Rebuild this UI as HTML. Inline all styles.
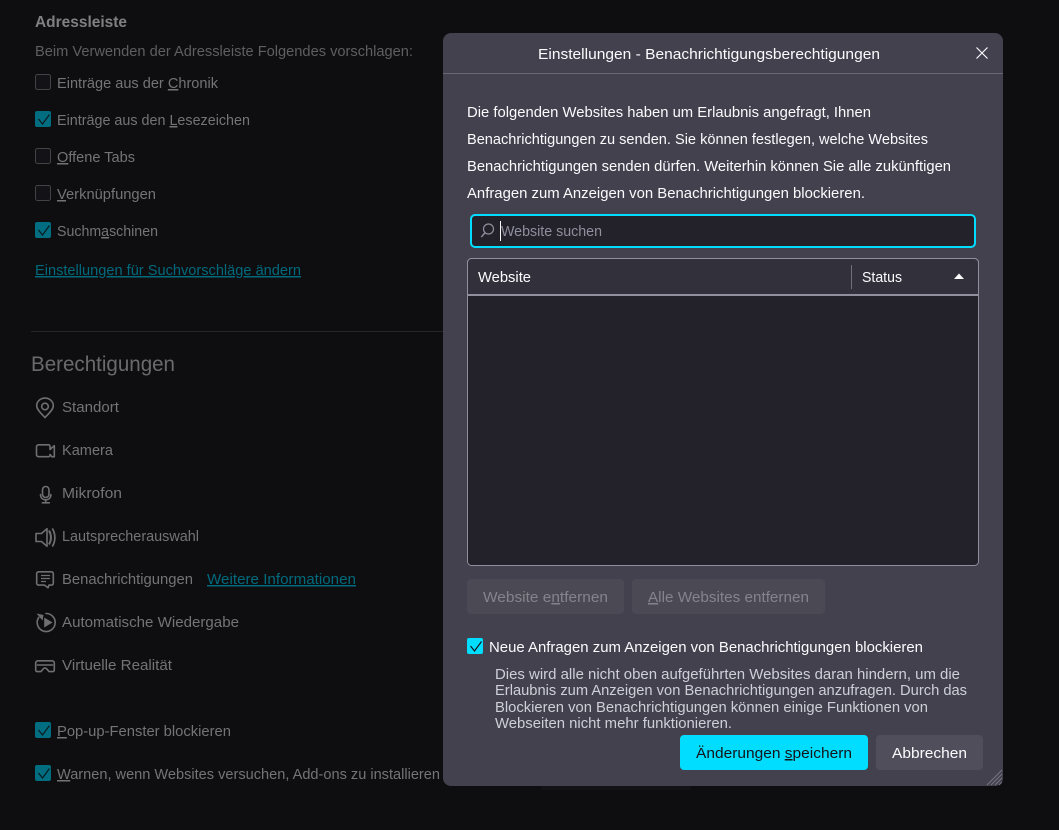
<!DOCTYPE html>
<html lang="de">
<head>
<meta charset="utf-8">
<title>Einstellungen</title>
<style>
html,body{margin:0;padding:0;background:#0e0e11;width:1059px;height:830px;overflow:hidden}
svg{display:block;position:absolute;left:0;top:0}
text{font-family:"Liberation Sans",sans-serif;font-size:15px;white-space:pre}
.d{fill:#747478}
.l{fill:#006a7c}
.w{fill:#fbfbfe}
.i{fill:none;stroke:#6f6f73;stroke-width:1.6;stroke-linejoin:round;stroke-linecap:round}
.f{fill:#6f6f73}
.u{text-decoration:underline}
</style>
</head>
<body>
<svg width="1059" height="830" viewBox="0 0 1059 830" xmlns="http://www.w3.org/2000/svg">
<rect width="1059" height="830" fill="#0e0e11"/>

<!-- Background page -->
<text x="35" y="27" class="d" style="font-weight:bold;font-size:16px;fill:#808084" textLength="92" lengthAdjust="spacingAndGlyphs">Adressleiste</text>
<text x="35" y="56" class="d" style="fill:#5f5f63" textLength="378" lengthAdjust="spacingAndGlyphs">Beim Verwenden der Adressleiste Folgendes vorschlagen:</text>

<rect x="35.5" y="74.500" width="15" height="15" rx="2" fill="#131317" stroke="#434347"/>
<text x="57" y="88" class="d" textLength="161" lengthAdjust="spacingAndGlyphs">Einträge aus der <tspan class="u">C</tspan>hronik</text>

<rect x="35" y="111" width="16" height="16" rx="2" fill="#006d80"/>
<path d="M38.500 119l4 5 7-9.500" fill="none" stroke="#0c1a20" stroke-width="1.200"/>
<text x="57" y="125" class="d" textLength="193" lengthAdjust="spacingAndGlyphs">Einträge aus den <tspan class="u">L</tspan>esezeichen</text>

<rect x="35.5" y="148.500" width="15" height="15" rx="2" fill="#131317" stroke="#434347"/>
<text x="57" y="162" class="d" textLength="78" lengthAdjust="spacingAndGlyphs"><tspan class="u">O</tspan>ffene Tabs</text>

<rect x="35.5" y="185.500" width="15" height="15" rx="2" fill="#131317" stroke="#434347"/>
<text x="57" y="199" class="d" textLength="99" lengthAdjust="spacingAndGlyphs"><tspan class="u">V</tspan>erknüpfungen</text>

<rect x="35" y="222" width="16" height="16" rx="2" fill="#006d80"/>
<path d="M38.500 230l4 5 7-9.500" fill="none" stroke="#0c1a20" stroke-width="1.200"/>
<text x="57" y="236" class="d" textLength="101" lengthAdjust="spacingAndGlyphs">Suchm<tspan class="u">a</tspan>schinen</text>

<text x="35" y="275" class="l u" textLength="266" lengthAdjust="spacingAndGlyphs">Einstellungen für Suchvorschläge ändern</text>

<rect x="31" y="331" width="412" height="1" fill="#26262a"/>
<text x="31" y="371" class="d" style="font-size:21px;fill:#6a6a6e" textLength="144" lengthAdjust="spacingAndGlyphs">Berechtigungen</text>

<!-- Standort -->
<path class="i" d="M45 417.600c-2.500-3-8.300-7.500-8.300-12a8.300 7.500 0 0 1 16.600 0c0 4.500-5.800 9-8.300 12z"/>
<circle class="i" cx="45" cy="406.500" r="3.300"/>
<text x="62" y="412" class="d" textLength="57" lengthAdjust="spacingAndGlyphs">Standort</text>

<!-- Kamera -->
<path class="i" d="M38.500 444.800h10a1.500 1.500 0 0 1 1.500 1.500v3.200l4.300-3.800v11l-2.300 .1-2-2.300v.7a1.500 1.500 0 0 1-1.500 1.500h-10a2 2 0 0 1-2-2v-7.900a2 2 0 0 1 2-2z"/>
<text x="62" y="455" class="d" textLength="51" lengthAdjust="spacingAndGlyphs">Kamera</text>

<!-- Mikrofon -->
<rect class="i" x="42.500" y="486.500" width="6.500" height="11" rx="3.250"/>
<path class="i" d="M40.500 494.500c0 3.500 2.200 5.300 5.200 5.300s5.200-1.800 5.200-5.300M45.700 500v2.500M42.300 502.800h7"/>
<text x="62" y="498" class="d" textLength="60" lengthAdjust="spacingAndGlyphs">Mikrofon</text>

<!-- Lautsprecher -->
<path class="i" d="M36 533.500h5.500l5.500-4.800v17.600l-5.500-4.800H36z"/>
<path d="M49 530.500c2.500 4.500 2.500 9.500 0 14" fill="none" stroke="#6f6f73" stroke-width="2"/>
<path d="M52.300 528.500c3.400 5.500 3.400 12.500 0 18" fill="none" stroke="#6f6f73" stroke-width="1.700"/>
<text x="62" y="541" class="d" textLength="137" lengthAdjust="spacingAndGlyphs">Lautsprecherauswahl</text>

<!-- Benachrichtigungen -->
<path class="i" d="M38.500 571.800h13a1.800 1.800 0 0 1 1.800 1.800v9.700a1.800 1.800 0 0 1-1.800 1.800h-2.500l-1 2.700-3.500-2.700h-6a1.800 1.800 0 0 1-1.800-1.800v-9.700a1.800 1.800 0 0 1 1.800-1.800z"/>
<path d="M41 575.500h9M41 578.500h9M41 581.500h5" fill="none" stroke="#6f6f73" stroke-width="1.300"/>
<text x="62" y="584" class="d" textLength="131" lengthAdjust="spacingAndGlyphs">Benachrichtigungen</text>
<text x="207" y="584" class="l u" textLength="149" lengthAdjust="spacingAndGlyphs">Weitere Informationen</text>

<!-- Automatische Wiedergabe -->
<path class="i" d="M38.700 617.500a9 9 0 1 0 7.300-4"/>
<path d="M36.500 613.500l7 1.500-1 5.500z" class="f"/>
<path d="M44.200 617.500l8.300 5-8.300 5z" class="f"/>
<text x="62" y="627" class="d" textLength="177" lengthAdjust="spacingAndGlyphs">Automatische Wiedergabe</text>

<!-- VR -->
<path class="i" d="M38 660.800h14a2.300 2.300 0 0 1 2.300 2.300v7a1.500 1.500 0 0 1-1.500 1.500h-3.800l-2.200-2.700a2.300 2.300 0 0 0-3.600 0l-2.200 2.700h-3.800a1.500 1.500 0 0 1-1.500-1.500v-7a2.300 2.300 0 0 1 2.300-2.300z"/>
<path class="i" d="M37.500 665h15"/>
<text x="62" y="670" class="d" textLength="110" lengthAdjust="spacingAndGlyphs">Virtuelle Realität</text>

<rect x="35" y="722" width="16" height="16" rx="2" fill="#006d80"/>
<path d="M38.500 730l4 5 7-9.500" fill="none" stroke="#0c1a20" stroke-width="1.200"/>
<text x="57" y="736" class="d" textLength="174" lengthAdjust="spacingAndGlyphs"><tspan class="u">P</tspan>op-up-Fenster blockieren</text>

<rect x="35" y="765" width="16" height="16" rx="2" fill="#006d80"/>
<path d="M38.500 773l4 5 7-9.500" fill="none" stroke="#0c1a20" stroke-width="1.200"/>
<text x="57" y="779" class="d" textLength="383" lengthAdjust="spacingAndGlyphs"><tspan class="u">W</tspan>arnen, wenn Websites versuchen, Add-ons zu installieren</text>

<rect x="541" y="770" width="150" height="20" rx="3" fill="#131317"/>

<!-- Dialog -->
<rect x="443" y="33" width="560" height="753" rx="8" fill="#42414d"/>
<rect x="443" y="73" width="560" height="1" fill="#6a6973"/>
<text x="538" y="59" class="w" textLength="342" lengthAdjust="spacingAndGlyphs">Einstellungen - Benachrichtigungsberechtigungen</text>
<path d="M976.500 47.500l11 11M987.500 47.500l-11 11" fill="none" stroke="#fbfbfe" stroke-width="1.200"/>

<text x="467" y="117" class="w" textLength="404" lengthAdjust="spacingAndGlyphs">Die folgenden Websites haben um Erlaubnis angefragt, Ihnen</text>
<text x="467" y="144" class="w" textLength="461" lengthAdjust="spacingAndGlyphs">Benachrichtigungen zu senden. Sie können festlegen, welche Websites</text>
<text x="467" y="171" class="w" textLength="484" lengthAdjust="spacingAndGlyphs">Benachrichtigungen senden dürfen. Weiterhin können Sie alle zukünftigen</text>
<text x="467" y="198" class="w" textLength="398" lengthAdjust="spacingAndGlyphs">Anfragen zum Anzeigen von Benachrichtigungen blockieren.</text>

<!-- Search -->
<rect x="471" y="215" width="504" height="32" rx="4" fill="#23222b" stroke="#00ddff" stroke-width="2"/>
<circle cx="488.500" cy="229" r="5" fill="none" stroke="#8f8f9d" stroke-width="1.200"/>
<path d="M484.800 233l-3.500 4" fill="none" stroke="#8f8f9d" stroke-width="1.400"/>
<rect x="500" y="221" width="1" height="20" fill="#fbfbfe"/>
<text x="501" y="236" style="fill:#8f8f9d" textLength="101" lengthAdjust="spacingAndGlyphs">Website suchen</text>

<!-- Table -->
<rect x="467.500" y="258.500" width="511" height="307" rx="4" fill="#23222b" stroke="#8f8f9d"/>
<path d="M468 294v-31.500a4 4 0 0 1 4-4h502a4 4 0 0 1 4 4V294z" fill="#32313b"/>
<path d="M471.500 258.500h503a4 4 0 0 1 4 4V294M467.500 294V262.500a4 4 0 0 1 4-4" fill="none" stroke="#8f8f9d"/>
<rect x="468" y="294" width="510" height="2" fill="#8f8f9d"/>
<rect x="851" y="265" width="1" height="24" fill="#6f6f79"/>
<text x="478" y="282" class="w" textLength="53" lengthAdjust="spacingAndGlyphs">Website</text>
<text x="862" y="282" class="w" textLength="40" lengthAdjust="spacingAndGlyphs">Status</text>
<path d="M954 279l5-5.500 5 5.500z" fill="#fbfbfe"/>

<!-- Disabled buttons -->
<rect x="467" y="579" width="157" height="35" rx="4" fill="#4a4954"/>
<text x="483" y="602" style="fill:#85848d;font-weight:500" textLength="125" lengthAdjust="spacingAndGlyphs">Website e<tspan class="u">n</tspan>tfernen</text>
<rect x="632" y="579" width="193" height="35" rx="4" fill="#4a4954"/>
<text x="648" y="602" style="fill:#85848d;font-weight:500" textLength="161" lengthAdjust="spacingAndGlyphs"><tspan class="u">A</tspan>lle Websites entfernen</text>

<!-- Checkbox -->
<rect x="467" y="638" width="16" height="16" rx="2" fill="#00ddff"/>
<path d="M470.500 646l4 5 7-9.500" fill="none" stroke="#15141a" stroke-width="1.200"/>
<text x="489" y="652" class="w" textLength="434" lengthAdjust="spacingAndGlyphs">Neue Anfragen zum Anzeigen von Benachrichtigungen blockieren</text>

<text x="495" y="679" style="fill:#cfcfd8;font-size:14.500px" textLength="465" lengthAdjust="spacingAndGlyphs">Dies wird alle nicht oben aufgeführten Websites daran hindern, um die</text>
<text x="495" y="695" style="fill:#cfcfd8;font-size:14.500px" textLength="472" lengthAdjust="spacingAndGlyphs">Erlaubnis zum Anzeigen von Benachrichtigungen anzufragen. Durch das</text>
<text x="495" y="712" style="fill:#cfcfd8;font-size:14.500px" textLength="433" lengthAdjust="spacingAndGlyphs">Blockieren von Benachrichtigungen können einige Funktionen von</text>
<text x="495" y="728" style="fill:#cfcfd8;font-size:14.500px" textLength="237" lengthAdjust="spacingAndGlyphs">Webseiten nicht mehr funktionieren.</text>

<!-- Footer buttons -->
<rect x="680" y="735" width="188" height="35" rx="4" fill="#00ddff"/>
<text x="696" y="758" style="fill:#15141a;font-weight:500" textLength="156" lengthAdjust="spacingAndGlyphs">Änderungen <tspan class="u">s</tspan>peichern</text>
<rect x="876" y="735" width="107" height="35" rx="4" fill="#4f4e5a"/>
<text x="892" y="758" class="w" style="font-weight:500" textLength="75" lengthAdjust="spacingAndGlyphs">Abbrechen</text>

<!-- Resizer grip -->
<path d="M987 785l15-15M991 785l11-11M995 785l7-7M999 785l3-3" fill="none" stroke="#77767f" stroke-width="1"/>
</svg>
</body>
</html>
